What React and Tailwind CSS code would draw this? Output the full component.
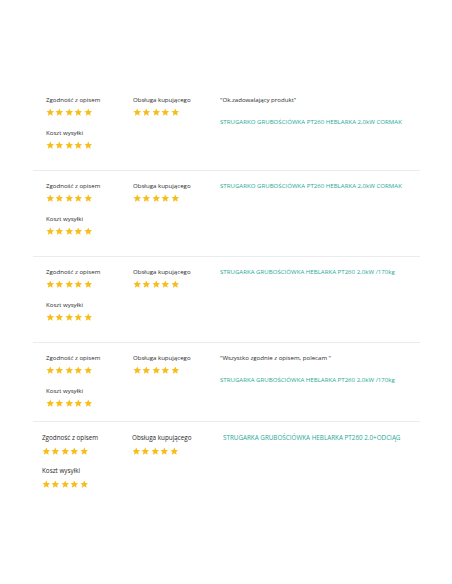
const reviews = [
    {
        quote: "\"Ok.zadowalający produkt\"",
        product: "STRUGARKO GRUBOŚCIÓWKA PT260 HEBLARKA 2,0kW CORMAK"
    },
    {
        quote: null,
        product: "STRUGARKO GRUBOŚCIÓWKA PT260 HEBLARKA 2,0kW CORMAK"
    },
    {
        quote: null,
        product: "STRUGARKA GRUBOŚCIÓWKA HEBLARKA PT260 2,0kW /170kg"
    },
    {
        quote: "\"Wszystko zgodnie z opisem, polecam \"",
        product: "STRUGARKA GRUBOŚCIÓWKA HEBLARKA PT260 2,0kW /170kg",
        short: true
    }
];

const Star = () => (
    <svg width="8.5" height="8.5" viewBox="0 0 24 24" className="fill-[#f7bd1b]">
        <path d="M12 1.5l3.2 6.9 7.5.8-5.6 5.1 1.6 7.4L12 17.9l-6.6 3.8 1.6-7.4-5.6-5.1 7.5-.8z" />
    </svg>
);

const Stars = () => (
    <div className="flex gap-[0.9px] h-[10px] items-center">
        {[0, 1, 2, 3, 4].map(i => <Star key={i} />)}
    </div>
);

const Rating = ({ label, gap }) => (
    <div className={gap ? "flex flex-col gap-[3px]" : "flex flex-col gap-[2px]"}>
        <span className="leading-[10px]">{label}</span>
        <Stars />
    </div>
);

const Row = ({ quote, product, short }) => (
    <div className={short ? "flex pl-[13px] pt-[10px] pb-[13px] border-b border-[#ececec]" : "flex pl-[13px] pt-[10px] pb-[20px] border-b border-[#ececec]"}>
        <div className="w-[87px] flex flex-col gap-[11px]">
            <Rating label="Zgodność z opisem" />
            <Rating label="Koszt wysyłki" />
        </div>
        <div className="w-[87px]">
            <Rating label="Obsługa kupującego" />
        </div>
        <div className="flex flex-col gap-[12px]">
            {quote && <span className="leading-[10px]">{quote}</span>}
            <span className="leading-[10px] text-[#26a996]">{product}</span>
        </div>
    </div>
);

const LastRow = ({ product }) => (
    <div className="flex pl-[9px] pt-[11px] pb-4 text-[6.3px]">
        <div className="w-[90px] flex flex-col gap-[10px]">
            <Rating label="Zgodność z opisem" gap />
            <Rating label="Koszt wysyłki" gap />
        </div>
        <div className="w-[91px]">
            <Rating label="Obsługa kupującego" gap />
        </div>
        <span className="leading-[10px] text-[#26a996]">{product}</span>
    </div>
);

const App = () => {
    return (
        <div className="w-[452px] h-[584px] bg-white text-[#2a2a2a] text-[6.1px] font-['Open_Sans',sans-serif]">
            <div className="pt-[85px] ml-[33px] w-[387px]">
                {reviews.map((r, i) => (
                    <Row key={i} quote={r.quote} product={r.product} short={r.short} />
                ))}
                <LastRow product="STRUGARKA GRUBOŚCIÓWKA HEBLARKA PT260 2.0+ODCIĄG" />
            </div>
        </div>
    );
};

export default App;
